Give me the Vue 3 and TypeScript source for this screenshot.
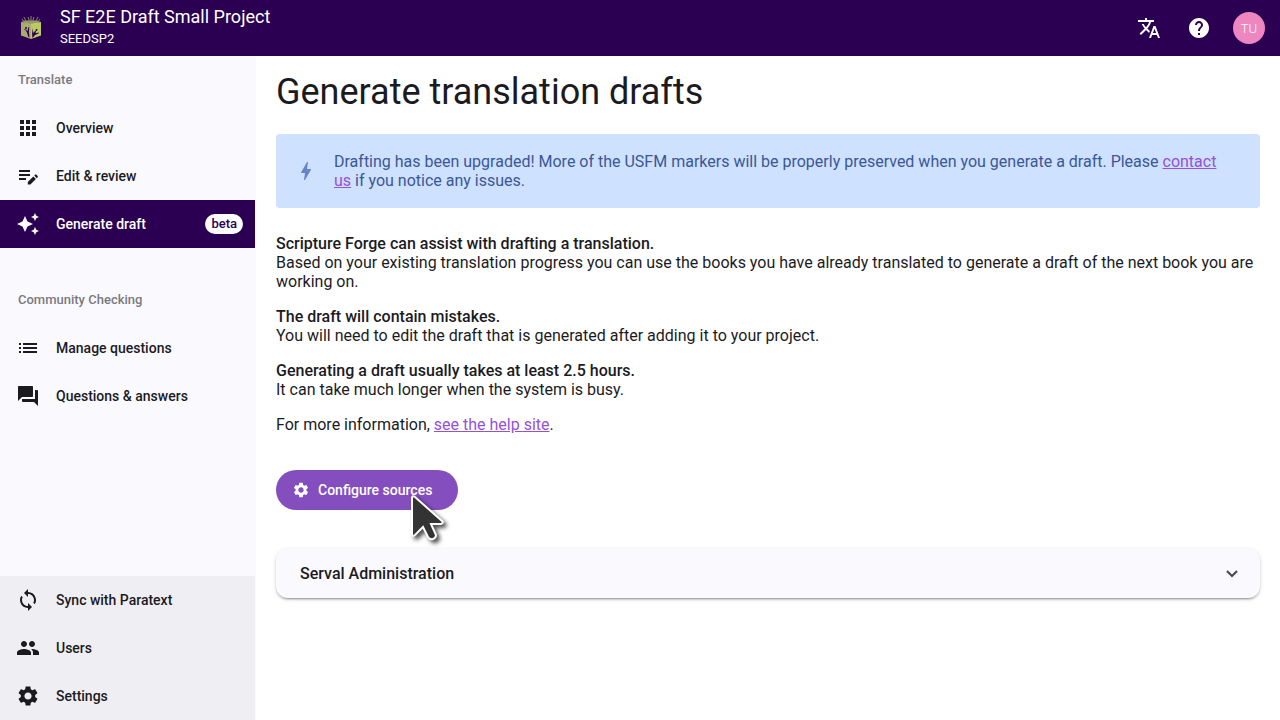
<script setup lang="ts">
interface NavItem {
  label: string
  icon: string
  active?: boolean
  badge?: string
}

const icons: Record<string, string> = {
  apps: 'M4 8h4V4H4v4zm6 12h4v-4h-4v4zm-6 0h4v-4H4v4zm0-6h4v-4H4v4zm6 0h4v-4h-4v4zm6-10v4h4V4h-4zm-6 4h4V4h-4v4zm6 6h4v-4h-4v4zm0 6h4v-4h-4v4z',
  editNote: 'M3 6h11v2H3zM3 10h11v2H3zM3 14h7v2H3zM17.300 12.500l2.600 2.600-5.500 5.500H11.800V18zM18.200 11.600l.7-.7c.5-.5 1.200-.5 1.700 0l.9.9c.5.5.5 1.200 0 1.700l-.7.7z',
  awesome: 'M19 9l1.250-2.750L23 5l-2.750-1.250L19 1l-1.250 2.750L15 5l2.750 1.250L19 9zm-7.500.5L9 4 6.500 9.500 1 12l5.500 2.500L9 20l2.500-5.500L17 12l-5.500-2.500zM19 15l-1.250 2.750L15 19l2.750 1.250L19 23l1.250-2.750L23 19l-2.750-1.250L19 15z',
  list: 'M3 13h2v-2H3v2zm0 4h2v-2H3v2zm0-8h2V7H3v2zm4 4h14v-2H7v2zm0 4h14v-2H7v2zM7 7v2h14V7H7z',
  forum: 'M21 6h-2v9H6v2c0 .55.45 1 1 1h11l4 4V7c0-.55-.45-1-1-1zm-4 6V3c0-.55-.45-1-1-1H3c-.55 0-1 .45-1 1v14l4-4h10c.55 0 1-.45 1-1z',
  sync: 'M12 4V1L8 5l4 4V6c3.310 0 6 2.690 6 6 0 1.010-.25 1.970-.7 2.800l1.460 1.460C19.540 15.030 20 13.570 20 12c0-4.420-3.580-8-8-8zm0 14c-3.310 0-6-2.690-6-6 0-1.010.25-1.970.7-2.800L5.240 7.740C4.460 8.970 4 10.430 4 12c0 4.420 3.580 8 8 8v3l4-4-4-4v3z',
  group: 'M16 11c1.660 0 2.990-1.340 2.990-3S17.660 5 16 5s-3 1.340-3 3 1.340 3 3 3zm-8 0c1.660 0 2.990-1.340 2.990-3S9.660 5 8 5 5 6.340 5 8s1.340 3 3 3zm0 2c-2.330 0-7 1.170-7 3.500V19h14v-2.500c0-2.330-4.670-3.500-7-3.500zm8 0c-.29 0-.62.02-.97.05 1.160.840 1.970 1.970 1.970 3.450V19h6v-2.500c0-2.330-4.670-3.500-7-3.500z',
  settings: 'M19.140 12.940c.04-.3.06-.61.06-.94 0-.32-.02-.64-.07-.94l2.030-1.580c.18-.14.23-.41.12-.61l-1.920-3.320c-.12-.22-.37-.29-.59-.22l-2.390.96c-.5-.38-1.030-.7-1.620-.94l-.36-2.540c-.04-.24-.24-.41-.48-.41h-3.840c-.24 0-.43.17-.47.41l-.36 2.540c-.59.24-1.130.57-1.620.94l-2.390-.96c-.22-.08-.47 0-.59.22L2.740 8.870c-.12.21-.08.47.12.61l2.030 1.580c-.05.3-.09.63-.09.94s.02.64.07.94l-2.030 1.580c-.18.14-.23.41-.12.61l1.920 3.320c.12.22.37.29.59.22l2.390-.96c.5.38 1.030.7 1.620.94l.36 2.540c.05.24.24.41.48.41h3.840c.24 0 .44-.17.47-.41l.36-2.540c.59-.24 1.130-.56 1.620-.94l2.390.96c.22.08.47 0 .59-.22l1.920-3.320c.12-.22.07-.47-.12-.61l-2.010-1.580zM12 15.600c-1.980 0-3.600-1.620-3.600-3.600s1.620-3.600 3.600-3.600 3.600 1.620 3.600 3.600-1.620 3.600-3.600 3.600z',
  translate: 'M12.870 15.070l-2.540-2.510.03-.03c1.740-1.940 2.980-4.170 3.710-6.530H17V4h-7V2H8v2H1v1.990h11.170C11.500 7.920 10.440 9.750 9 11.350 8.070 10.320 7.300 9.190 6.690 8h-2c.73 1.630 1.730 3.170 2.980 4.560l-5.090 5.020L4 19l5-5 3.110 3.110.76-2.040zM18.500 10h-2L12 22h2l1.120-3h4.750L21 22h2l-4.500-12zm-2.620 7l1.620-4.330L19.120 17h-3.240z',
  help: 'M12 2C6.480 2 2 6.480 2 12s4.480 10 10 10 10-4.480 10-10S17.520 2 12 2zm1 17h-2v-2h2v2zm2.070-7.750l-.9.920C13.450 12.900 13 13.500 13 15h-2v-.5c0-1.100.45-2.100 1.170-2.830l1.240-1.260c.37-.36.59-.86.59-1.410 0-1.100-.9-2-2-2s-2 .9-2 2H8c0-2.210 1.790-4 4-4s4 1.790 4 4c0 .88-.36 1.680-.93 2.250z',
  bolt: 'M11 21h-1l1-7H7.500c-.58 0-.57-.32-.38-.66.19-.34.05-.08.07-.12C8.480 10.940 10.420 7.540 13 3h1l-1 7h3.500c.49 0 .56.33.47.51l-.07.15C12.960 17.550 11 21 11 21z',
}

const translateItems: NavItem[] = [
  { label: 'Overview', icon: 'apps' },
  { label: 'Edit & review', icon: 'editNote' },
  { label: 'Generate draft', icon: 'awesome', active: true, badge: 'beta' },
]
const checkingItems: NavItem[] = [
  { label: 'Manage questions', icon: 'list' },
  { label: 'Questions & answers', icon: 'forum' },
]
const adminItems: NavItem[] = [
  { label: 'Sync with Paratext', icon: 'sync' },
  { label: 'Users', icon: 'group' },
  { label: 'Settings', icon: 'settings' },
]
const sections = [
  { title: 'Translate', items: translateItems },
  { title: 'Community Checking', items: checkingItems },
]
</script>

<template>
  <div class="app">
    <header class="toolbar">
      <a class="logo" href="#" aria-label="Scripture Forge">
        <svg viewBox="0 0 20 24" aria-hidden="true">
          <path d="M3 1l3 6M7 1l2 6M10 0v7M13 1l-2 6M17 1l-3 6M1 3l3 4M19 3l-3 4" stroke="#a5a673" stroke-width=".8" />
          <path d="M0 6l4-1.500h12L20 6l-10 2z" fill="#96986a" />
          <path d="M0 6l10 1.500V23L0 19.500z" fill="#a9ad6c" />
          <path d="M10 7.500L20 6v13.500L10 23z" fill="#bcca62" />
          <path d="M2.500 13c2.500 0 3 1.500 4 2l1-4 .8.3-.4 4.500.5 5.500-1.200-.6-1-3.700-1.500-2.500z" fill="#2b0052" />
          <path d="M11.800 12l.4 5 2-2.200.8.500-.5 2 3.500-.8-.5 1-3.500 1.600-2 2.300-.7.200-.2-4.500z" fill="#2b0052" />
          <circle cx="5" cy="12" r="1" fill="#2b0052" />
          <circle cx="15.500" cy="14" r="1" fill="#2b0052" />
        </svg>
      </a>
      <div class="project">
        <span class="project-name">SF E2E Draft Small Project</span>
        <span class="project-code">SEEDSP2</span>
      </div>
      <div class="actions">
        <button class="icon-button" type="button" aria-label="Language">
          <svg class="icon" viewBox="0 0 24 24"><path :d="icons.translate" /></svg>
        </button>
        <button class="icon-button" type="button" aria-label="Help">
          <svg class="icon" viewBox="0 0 24 24"><path :d="icons.help" /></svg>
        </button>
        <button class="avatar" type="button">TU</button>
      </div>
    </header>

    <div class="body">
      <nav class="sidebar">
        <div class="nav-main">
          <section v-for="s in sections" :key="s.title" class="nav-section">
            <h2>{{ s.title }}</h2>
            <a v-for="i in s.items" :key="i.label" href="#" class="nav-item" :class="{ active: i.active }">
              <svg class="icon" viewBox="0 0 24 24"><path :d="icons[i.icon]" /></svg>
              <span>{{ i.label }}</span>
              <span v-if="i.badge" class="badge">{{ i.badge }}</span>
            </a>
          </section>
        </div>
        <div class="nav-admin">
          <a v-for="i in adminItems" :key="i.label" href="#" class="nav-item">
            <svg class="icon" viewBox="0 0 24 24"><path :d="icons[i.icon]" /></svg>
            <span>{{ i.label }}</span>
          </a>
        </div>
      </nav>

      <main class="content">
        <h1>Generate translation drafts</h1>
        <div class="notice">
          <svg class="icon" viewBox="0 0 24 24"><path :d="icons.bolt" /></svg>
          <p>
            Drafting has been upgraded! More of the USFM markers will be properly preserved when you generate a draft. Please
            <a href="#">contact us</a> if you notice any issues.
          </p>
        </div>
        <div class="info">
          <p>
            <strong>Scripture Forge can assist with drafting a translation.</strong><br />
            Based on your existing translation progress you can use the books you have already translated to generate a draft
            of the next book you are working on.
          </p>
          <p>
            <strong>The draft will contain mistakes.</strong><br />
            You will need to edit the draft that is generated after adding it to your project.
          </p>
          <p>
            <strong>Generating a draft usually takes at least 2.5 hours.</strong><br />
            It can take much longer when the system is busy.
          </p>
          <p>For more information, <a href="#">see the help site</a>.</p>
        </div>
        <div class="configure">
          <button class="primary" type="button">
            <svg viewBox="0 0 24 24"><path :d="icons.settings" /></svg>
            Configure sources
          </button>
          <svg class="pointer" viewBox="0 0 40 52" aria-hidden="true">
            <path d="M4 4v36q0 3 3 1l8-8 5 10q2 3 5 2t3-4l-5-11h10q3-1 1-3L7 3Q4 1 4 4z" />
          </svg>
        </div>
        <button class="panel" type="button" aria-expanded="false">
          <span>Serval Administration</span>
          <svg viewBox="0 0 12 8" aria-hidden="true"><path d="M1 1l5 5 5-5" /></svg>
        </button>
      </main>
    </div>
  </div>
</template>

<style>
body {
  margin: 0;
}
</style>

<style scoped>
.app {
  display: flex;
  flex-direction: column;
  height: 100vh;
  overflow: hidden;
  background: #fff;
  color: #1b1b1f;
  font-family: Roboto, "Liberation Sans", sans-serif;
  font-size: 16px;
  line-height: 19px;
}
button {
  font-family: inherit;
  border: 0;
  padding: 0;
  cursor: pointer;
}
.icon {
  width: 24px;
  height: 24px;
  flex: none;
  fill: currentColor;
}
.toolbar {
  display: flex;
  align-items: center;
  flex: none;
  height: 56px;
  box-sizing: border-box;
  padding: 0 15px 0 21px;
  background: #2b0052;
  color: #fff;
}
.logo {
  display: flex;
  margin-right: 19px;
}
.logo svg {
  width: 20px;
  height: 24px;
}
.project {
  display: flex;
  flex-direction: column;
  padding-bottom: 2px;
}
.project-name {
  font-size: 18px;
  line-height: 24px;
}
.project-code {
  font-size: 13px;
  line-height: 20px;
}
.actions {
  display: flex;
  align-items: center;
  margin-left: auto;
}
.icon-button {
  display: flex;
  margin-right: 26px;
  background: none;
  color: #fff;
}
.icon-button + .avatar {
  margin-left: -4px;
}
.avatar {
  width: 32px;
  height: 32px;
  border-radius: 50%;
  background: #ee86bf;
  color: #fff;
  font-size: 13px;
  font-weight: 300;
}
.body {
  display: flex;
  flex: 1;
  min-height: 0;
}
.sidebar {
  display: flex;
  flex-direction: column;
  justify-content: space-between;
  flex: none;
  width: 255px;
  background: #faf9fe;
  border-right: 1px solid #fbfafd;
}
.nav-section h2 {
  margin: 0;
  padding: 0 18px;
  font-size: 13px;
  font-weight: 500;
  line-height: 48px;
  color: #7b7a7d;
}
.nav-section + .nav-section {
  margin-top: 28px;
}
.nav-item {
  display: flex;
  align-items: center;
  gap: 16px;
  height: 48px;
  padding: 0 12px 0 16px;
  color: #1b1b1f;
  font-size: 14px;
  font-weight: 500;
  text-decoration: none;
}
.nav-item.active {
  background: #2b0052;
  color: #fff;
}
.badge {
  margin-left: auto;
  padding: 0 6px;
  border-radius: 10px;
  background: #fff;
  color: #2b0052;
  font-size: 13px;
  line-height: 20px;
}
.nav-admin {
  background: #efeef3;
}
.content {
  flex: 1;
  min-width: 0;
  padding: 8px 20px 20px;
}
h1 {
  margin: 0 0 14px;
  font-size: 36px;
  font-weight: 400;
  line-height: 56px;
}
a {
  color: #9551d8;
}
p {
  margin: 0;
}
.notice {
  display: flex;
  align-items: center;
  gap: 16px;
  padding: 18px 36px 18px 18px;
  border-radius: 4px;
  background: #cee1fe;
  color: #3b5798;
}
.notice .icon {
  color: #6684c8;
}
.info {
  display: flex;
  flex-direction: column;
  gap: 16px;
  margin-top: 26px;
}
strong {
  font-weight: 500;
}
.configure {
  position: relative;
  margin: 36px 0 39px;
}
.primary {
  display: flex;
  align-items: center;
  gap: 8px;
  height: 40px;
  padding: 0 26px 0 16px;
  border-radius: 20px;
  background: #844ebf;
  color: #fff;
  font-size: 14px;
  font-weight: 500;
}
.primary svg {
  width: 18px;
  height: 18px;
  fill: currentColor;
}
.pointer {
  position: absolute;
  left: 132px;
  top: 24px;
  width: 40px;
  height: 52px;
  overflow: visible;
  fill: #333;
  stroke: #fff;
  stroke-width: 2;
  filter: drop-shadow(3px 3px 2px rgb(0 0 0 / 70%));
}
.panel {
  display: flex;
  align-items: center;
  justify-content: space-between;
  width: 100%;
  height: 49px;
  padding: 0 22px 0 24px;
  border-radius: 12px;
  background: #faf9fe;
  box-shadow: 0 3px 1px -2px rgb(0 0 0 / 20%), 0 2px 2px rgb(0 0 0 / 14%), 0 1px 5px rgb(0 0 0 / 12%);
  color: #1b1b1f;
  font-size: 16px;
  font-weight: 500;
}
.panel svg {
  width: 12px;
  height: 8px;
  fill: none;
  stroke: #49454e;
  stroke-width: 2;
}
</style>
